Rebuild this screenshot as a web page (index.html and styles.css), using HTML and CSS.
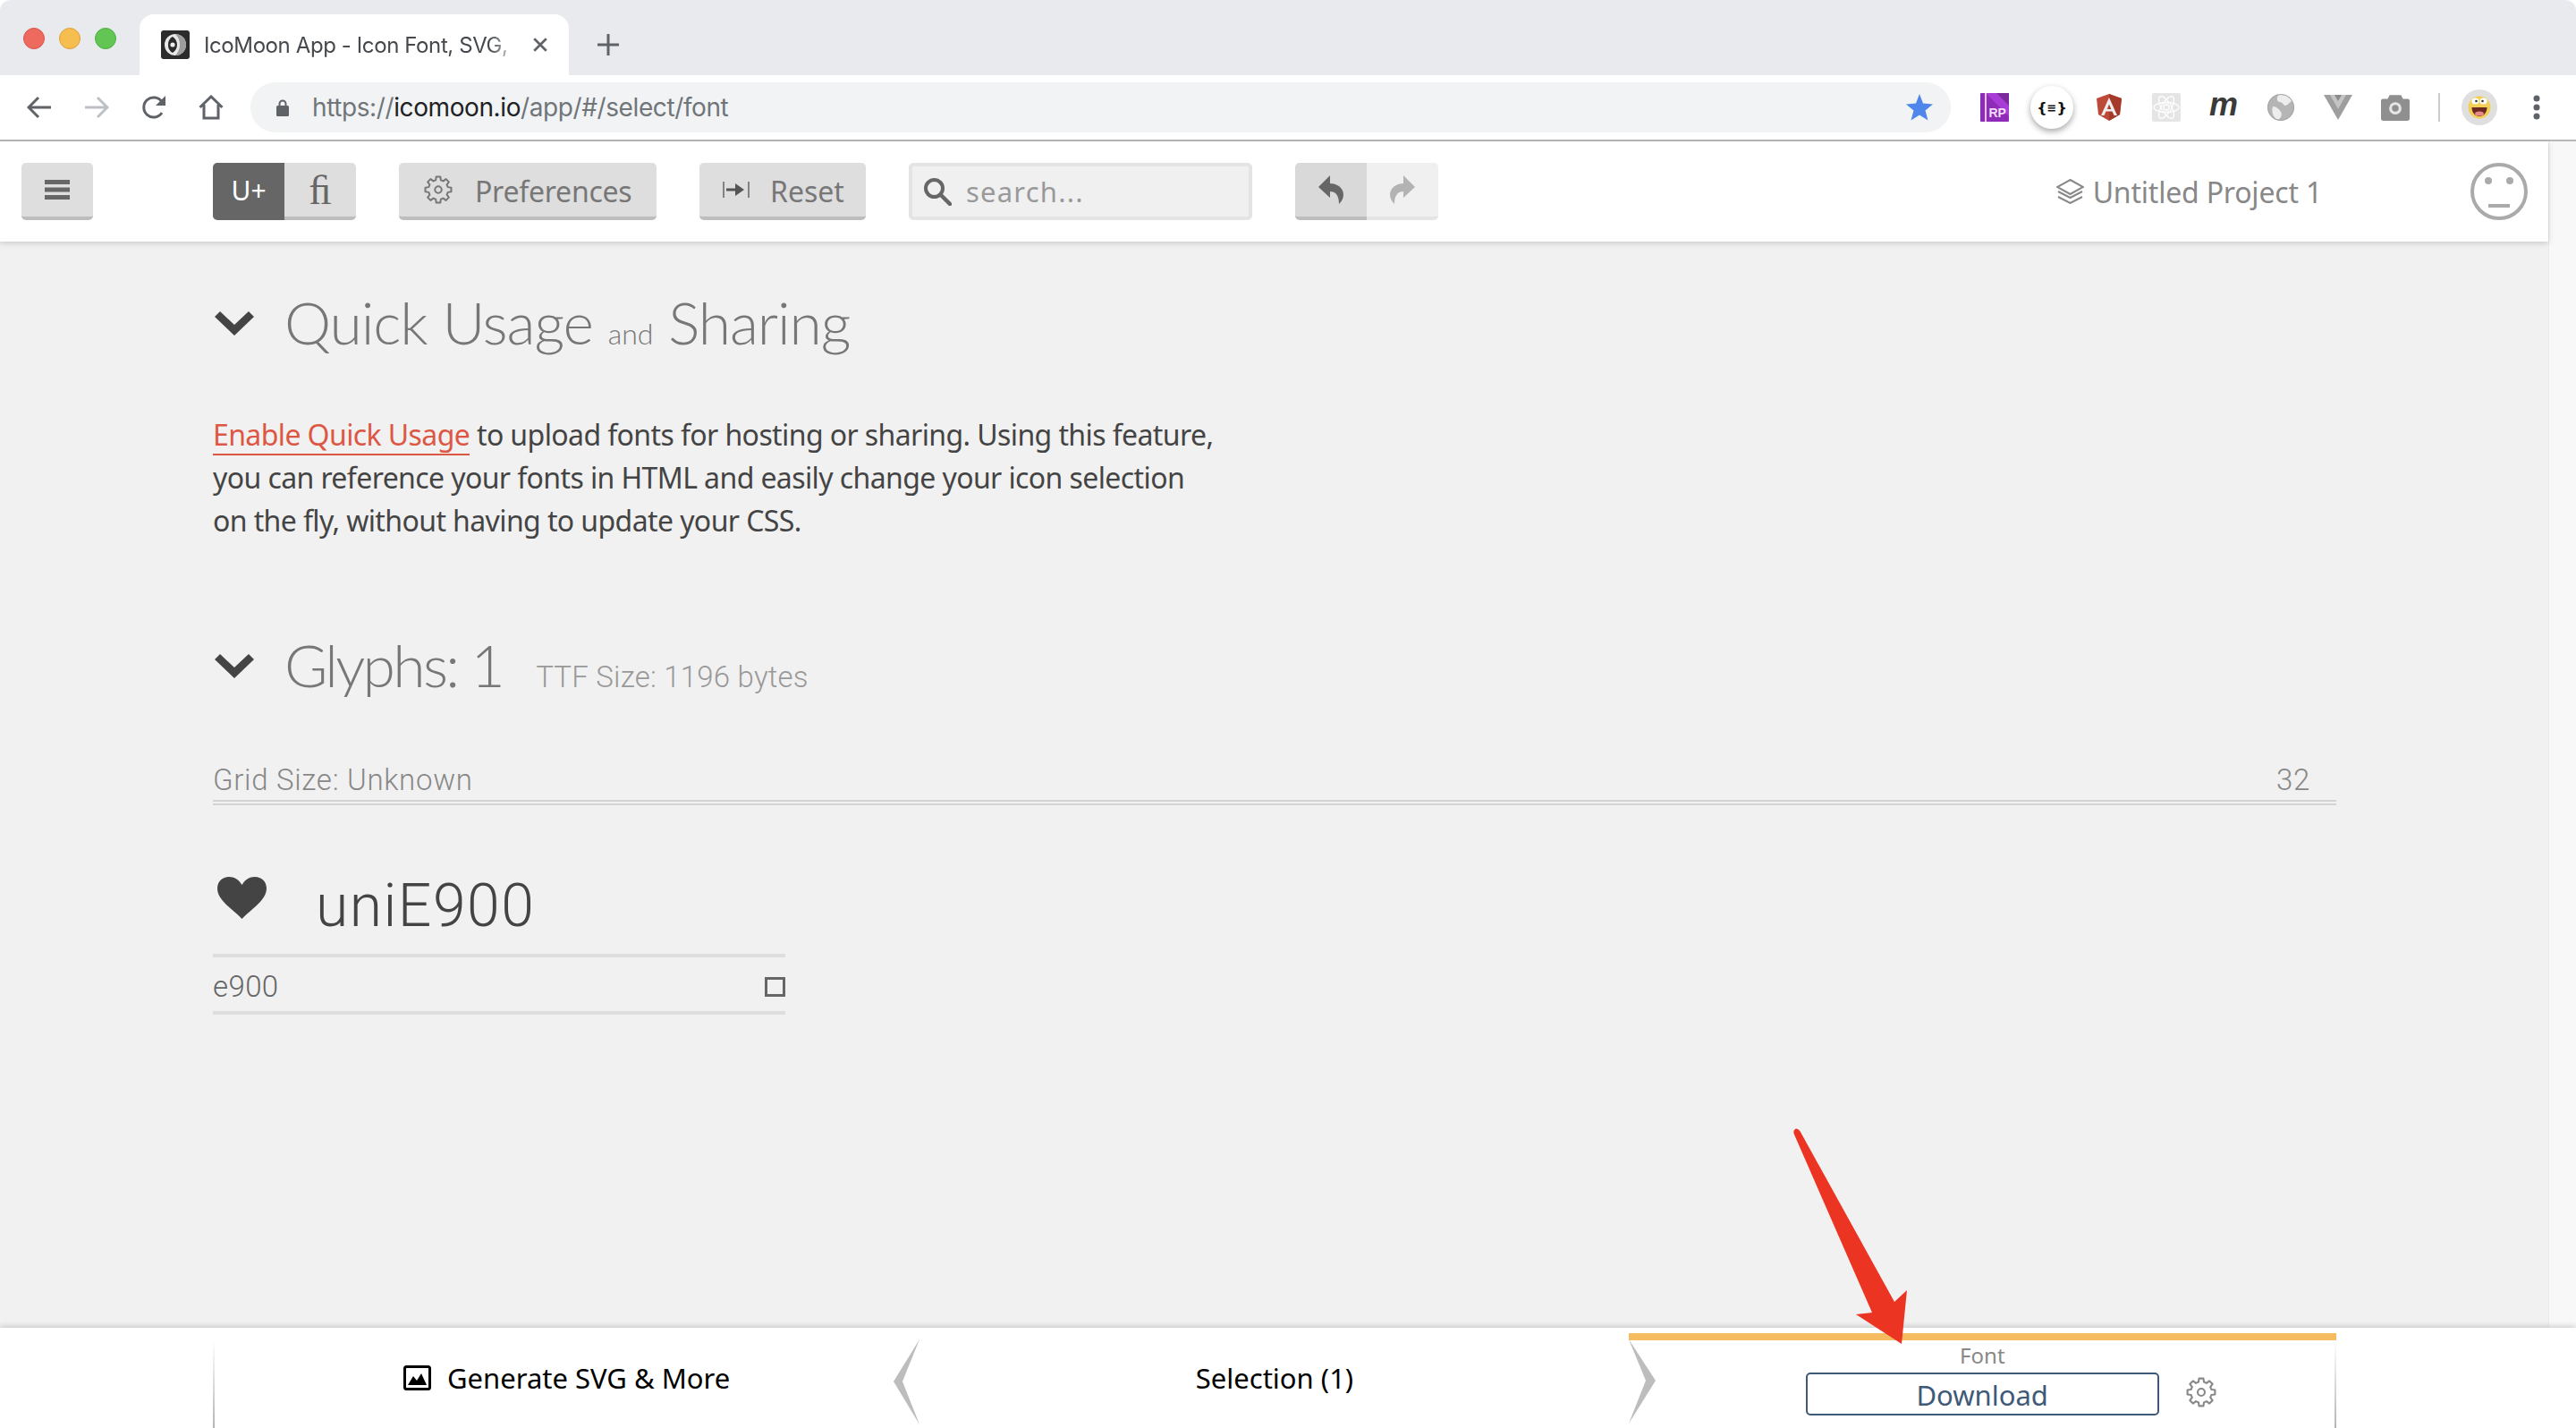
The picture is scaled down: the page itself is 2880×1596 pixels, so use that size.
FILE: index.html
```html
<!DOCTYPE html>
<html lang="en">

<head>
    <meta charset="UTF-8">
    <meta name="viewport" content="width=device-width, initial-scale=1.0">
    <title>IcoMoon App - Icon Font, SVG, PDF &amp; PNG Generator</title>
    <link rel="stylesheet" href="styles.css">
</head>

<body>
    <svg class="defs" width="0" height="0">
        <symbol id="gear" viewBox="0 0 24 24">
            <polygon points="9.85,3.98 10.28,1.14 13.72,1.14 14.15,3.98 16.15,4.81 18.47,3.1 20.9,5.53 19.19,7.85 20.02,9.85 22.86,10.28 22.86,13.72 20.02,14.15 19.19,16.15 20.9,18.47 18.47,20.9 16.15,19.19 14.15,20.02 13.72,22.86 10.28,22.86 9.85,20.02 7.85,19.19 5.53,20.9 3.1,18.47 4.81,16.15 3.98,14.15 1.14,13.72 1.14,10.28 3.98,9.85 4.81,7.85 3.1,5.53 5.53,3.1 7.85,4.81" fill="none" stroke="currentColor" stroke-width="1.5" stroke-linejoin="round"/>
            <circle cx="12" cy="12" r="2.8" fill="none" stroke="currentColor" stroke-width="1.5"/>
        </symbol>
        <symbol id="chevron" viewBox="0 0 44 27">
            <polygon points="0,6 6,0 22,15 38,0 44,6 22,27" fill="currentColor"/>
        </symbol>
    </svg>

    <!-- browser chrome -->
    <div class="tabstrip">
        <div class="lights">
            <span class="light red"></span>
            <span class="light yellow"></span>
            <span class="light green"></span>
        </div>
        <div class="tab">
            <svg class="favicon" viewBox="0 0 32 32">
                <rect width="32" height="32" rx="3" fill="#2b2b2b"/>
                <circle cx="16" cy="16" r="12" fill="#e8e8e8"/>
                <path d="M16 4a12 12 0 0 1 0 24c3-3 5-7 5-12s-2-9-5-12z" fill="#9d9d9d"/>
                <path d="M13 7c-4 2-5 6-5 9s1 7 5 9c3-2 5-5 5-9s-2-7-5-9z" fill="#2b2b2b"/>
                <circle cx="13" cy="16" r="2.6" fill="#eee"/>
            </svg>
            <span class="tab-title">IcoMoon App - Icon Font, SVG,</span>
            <svg class="tab-close" viewBox="0 0 16 16"><path d="M2 2l12 12M14 2L2 14" stroke="#5f6368" stroke-width="2.4"/></svg>
        </div>
        <svg class="new-tab" viewBox="0 0 24 24"><path d="M12 0v24M0 12h24" stroke="#5f6368" stroke-width="3"/></svg>
    </div>

    <div class="omnibar">
        <button class="nav-btn">
            <svg viewBox="0 0 28 28"><path d="M27 14H3M13 3L2 14l11 11" fill="none" stroke="#5f6368" stroke-width="3"/></svg>
        </button>
        <button class="nav-btn">
            <svg viewBox="0 0 28 28"><path d="M1 14h24M15 3l11 11-11 11" fill="none" stroke="#bdc1c6" stroke-width="3"/></svg>
        </button>
        <button class="nav-btn">
            <svg viewBox="0 0 28 28"><path d="M23 20a11 11 0 1 1 0-12" fill="none" stroke="#5f6368" stroke-width="3"/><polygon points="27,1 27,12 16,12" fill="#5f6368"/></svg>
        </button>
        <button class="nav-btn">
            <svg viewBox="0 0 28 28"><path d="M1.5 14L14 2l12.5 12M6 11v15h16V11" fill="none" stroke="#5f6368" stroke-width="3"/></svg>
        </button>

        <div class="address">
            <svg class="lock" viewBox="0 0 14 20"><path d="M3.5 9V6a3.5 3.5 0 0 1 7 0v3" fill="none" stroke="#5f6368" stroke-width="2"/><rect y="8" width="14" height="12" rx="1.5" fill="#5f6368"/></svg>
            <span class="url">https://<b>icomoon.io</b>/app/#/select/font</span>
            <svg class="star" viewBox="0 0 30 30"><polygon points="15,0 19,10.5 30,11.5 21.500,18.500 24.500,29.500 15,23.500 5.500,29.500 8.500,18.500 0,11.500 11,10.500" fill="#4f86ec"/></svg>
        </div>

        <div class="extensions">
            <span class="ext">
                <svg viewBox="0 0 32 32">
                    <rect width="32" height="32" rx="1" fill="#8e2bb8"/>
                    <polygon points="6,0 32,0 32,26" fill="#a93cd6"/>
                    <polygon points="18,0 32,0 32,14" fill="#7b2a9e"/>
                    <rect x="5" width="2" height="32" fill="#e7c6f2"/>
                    <text x="9.500" y="27" class="ext-rp">RP</text>
                </svg>
            </span>
            <span class="ext ext-active">
                <span class="ext-bubble">{<i>≡</i>}</span>
            </span>
            <span class="ext">
                <svg viewBox="0 0 32 32">
                    <polygon points="16,1 2,6 4,24 16,31 28,24 30,6" fill="#bd4a38"/>
                    <polygon points="16,1 30,6 28,24 16,31" fill="#a63a2a"/>
                    <path d="M16 5L7 25h3.500l2-4.500h7l2 4.500H25L16 5zm0 7.500l2.300 5.500h-4.600L16 12.500z" fill="#eee"/>
                </svg>
            </span>
            <span class="ext">
                <svg viewBox="0 0 32 32">
                    <rect width="32" height="32" rx="2" fill="#e5e5e5"/>
                    <g fill="none" stroke="#fff" stroke-width="1.300">
                        <ellipse cx="16" cy="16" rx="14" ry="5.500"/>
                        <ellipse cx="16" cy="16" rx="14" ry="5.500" transform="rotate(60 16 16)"/>
                        <ellipse cx="16" cy="16" rx="14" ry="5.500" transform="rotate(120 16 16)"/>
                        <circle cx="16" cy="16" r="3"/>
                    </g>
                </svg>
            </span>
            <span class="ext ext-m">m</span>
            <span class="ext">
                <svg viewBox="0 0 32 32">
                    <circle cx="16" cy="16" r="15" fill="#b5b5b5"/>
                    <path d="M16 1c5 0 10 3 13 8-4 1-5 5-8 5-2 0-3-4-6-4-4 0-4-5-1-9h2zM7 15c4 0 7 3 9 6s0 7-3 9C8 28 5 22 7 15z" fill="#ededed"/>
                    <circle cx="16" cy="16" r="14.500" fill="none" stroke="#a5a5a5"/>
                </svg>
            </span>
            <span class="ext">
                <svg viewBox="0 0 32 28">
                    <polygon points="0,0 32,0 16,28" fill="#9e9e9e"/>
                    <polygon points="7,0 25,0 16,16" fill="#c4c4c4"/>
                    <polygon points="12,0 20,0 16,7" fill="#8a8a8a"/>
                </svg>
            </span>
            <span class="ext">
                <svg viewBox="0 0 30 28">
                    <path d="M2 5h5l2-4h12l2 4h5a2 2 0 0 1 2 2v19a2 2 0 0 1-2 2H2a2 2 0 0 1-2-2V7a2 2 0 0 1 2-2z" fill="#8f8f8f"/>
                    <circle cx="15" cy="15" r="6.500" fill="#e5e5e5"/>
                    <circle cx="15" cy="15" r="3.500" fill="#8f8f8f"/>
                </svg>
            </span>
        </div>
        <span class="omni-sep"></span>
        <svg class="avatar" viewBox="0 0 40 40">
            <circle cx="20" cy="20" r="20" fill="#dfdfdf"/>
            <circle cx="20" cy="20" r="12.500" fill="#f3cf58"/>
            <ellipse cx="15.500" cy="13" rx="4" ry="3.500" fill="#fff"/>
            <ellipse cx="24.500" cy="13" rx="4" ry="3.500" fill="#fff"/>
            <circle cx="16.500" cy="13" r="1.300" fill="#333"/>
            <circle cx="23.500" cy="13" r="1.300" fill="#333"/>
            <path d="M11.500 20h17c0 6-4 10-8.500 10s-8.500-4-8.500-10z" fill="#6a2a20"/>
            <ellipse cx="20" cy="27" rx="5" ry="2.500" fill="#e88a8a"/>
        </svg>
        <svg class="dots" viewBox="0 0 8 28">
            <circle cx="4" cy="4" r="3.500" fill="#5f6368"/>
            <circle cx="4" cy="14" r="3.500" fill="#5f6368"/>
            <circle cx="4" cy="24" r="3.500" fill="#5f6368"/>
        </svg>
    </div>

    <!-- icomoon app -->
    <div class="app">
        <div class="app-main">
            <div class="toolbar">
                <button class="btn btn-menu">
                    <svg viewBox="0 0 28 22"><path d="M0 0h28v5H0zM0 8.500h28v5H0zM0 17h28v5H0z" fill="#666"/></svg>
                </button>
                <div class="btn-group">
                    <button class="btn btn-dark">U+</button>
                    <button class="btn btn-fi">ﬁ</button>
                </div>
                <button class="btn btn-prefs">
                    <svg class="btn-gear"><use href="#gear"/></svg>
                    <span>Preferences</span>
                </button>
                <button class="btn btn-reset">
                    <svg viewBox="0 0 30 20"><path d="M1 1v18M29 1v18" stroke="#666" stroke-width="1.500"/><path d="M4 10h12" stroke="#555" stroke-width="3"/><polygon points="14,3 24,10 14,17" fill="#555"/></svg>
                    <span>Reset</span>
                </button>
                <div class="search">
                    <svg viewBox="0 0 32 32"><circle cx="12.500" cy="12.500" r="9.500" fill="none" stroke="#666" stroke-width="4"/><path d="M19.500 19.500L30 30" stroke="#666" stroke-width="4.500" stroke-linecap="round"/></svg>
                    <span>search...</span>
                </div>
                <div class="btn-group undo-group">
                    <button class="btn btn-undo">
                        <svg viewBox="0 0 28 32"><path d="M13 0L0 13l13 12v-7c6 0 10 4 10 14 5-5 6-10 4-15s-8-8-14-8z" fill="#666"/></svg>
                    </button>
                    <button class="btn btn-redo">
                        <svg viewBox="0 0 28 32"><path d="M15 0l13 13-13 12v-7C9 18 5 22 5 32 0 27-1 22 1 17s8-8 14-8z" fill="#b3b3b3"/></svg>
                    </button>
                </div>
                <div class="project">
                    <svg viewBox="0 0 31 28"><path d="M15.500 1L30 9l-14.500 8L1 9zM2 14l13.500 7L29 14M2 20l13.500 7L29 20" fill="none" stroke="#888" stroke-width="2"/></svg>
                    <span>Untitled Project 1</span>
                </div>
                <svg class="face" viewBox="0 0 64 64">
                    <circle cx="32" cy="32" r="30" fill="none" stroke="#aaa" stroke-width="4"/>
                    <circle cx="20" cy="20" r="4" fill="#aaa"/>
                    <circle cx="44" cy="20" r="4" fill="#aaa"/>
                    <rect x="20" y="46" width="24" height="4" fill="#aaa"/>
                </svg>
            </div>

            <div class="content">
                <h2 class="section-title">
                    <svg class="chevron"><use href="#chevron"/></svg>
                    <span>Quick Usage <small>and</small> Sharing</span>
                </h2>
                <p class="intro">
                    <a class="link">Enable Quick Usage</a> to upload fonts for hosting or sharing. Using this feature,<br>
                    you can reference your fonts in HTML and easily change your icon selection<br>
                    on the fly, without having to update your CSS.
                </p>

                <h2 class="section-title glyphs-title">
                    <svg class="chevron"><use href="#chevron"/></svg>
                    <span>Glyphs: 1</span>
                    <small class="ttf-size">TTF Size: 1196 bytes</small>
                </h2>

                <div class="grid-size">
                    <span>Grid Size: Unknown</span>
                    <span>32</span>
                </div>

                <div class="glyph">
                    <div class="glyph-name">
                        <svg viewBox="0 0 55 47"><path d="M27.500 47C20 38 0 27 0 13 0 5 6 0 13 0c6 0 11 3 14.500 9C31 3 36 0 42 0c7 0 13 5 13 13 0 14-20 25-27.500 34z" fill="#444"/></svg>
                        <span>uniE900</span>
                    </div>
                    <div class="glyph-code">
                        <span>e900</span>
                        <i class="glyph-check"></i>
                    </div>
                </div>
            </div>
        </div>
        <div class="scrollbar"></div>
    </div>

    <div class="footer">
        <div class="footer-panes">
            <div class="pane pane-left">
                <svg class="pane-icon" viewBox="0 0 31 28"><rect x="1.500" y="1.500" width="28" height="25" rx="2" fill="none" stroke="#000" stroke-width="3"/><polygon points="5,22 11,12 15,17 20,9 26,22" fill="#000"/></svg>
                <span>Generate SVG &amp; More</span>
                <svg class="pane-chev pane-chev-left" viewBox="0 0 30 96"><polygon points="29,0 0,47 29,95 10,47" fill="#bdbdbd"/></svg>
            </div>
            <div class="pane">
                <span>Selection (1)</span>
            </div>
            <div class="pane pane-font">
                <div class="font-bar"></div>
                <svg class="pane-chev pane-chev-right" viewBox="0 0 30 96"><polygon points="0,0 30,46 0,94 19,46" fill="#bdbdbd"/></svg>
                <div class="font-label">Font</div>
                <div class="download-row">
                    <button class="download">Download</button>
                    <svg class="download-gear"><use href="#gear"/></svg>
                </div>
            </div>
        </div>
    </div>

    <!-- red annotation arrow -->
    <svg class="arrow" viewBox="0 0 140 250">
        <path d="M6 13C4 9 7 5 10 7c2 1 3 3 4 5L118 200l14-13-6 60-51-33 18-2z" fill="#ec3423"/>
    </svg>
</body>

</html>
```

FILE: styles.css
```css
body {
    margin: 0;
    width: 2880px;
    height: 1596px;
    overflow: hidden;
    position: relative;
    display: flex;
    flex-direction: column;
    background-color: #fff;
    font-family: "Noto Sans", sans-serif;
    color: #444;
}

button {
    font-family: inherit;
    border: none;
    padding: 0;
}

.defs {
    position: absolute;
}

/* tab strip */
.tabstrip {
    height: 84px;
    flex: none;
    display: flex;
    align-items: flex-end;
    background-color: #e8eaed;
    border-radius: 12px 12px 0 0;
}

.lights {
    width: 156px;
    height: 84px;
    display: flex;
    gap: 16px;
    padding: 31px 0 0 26px;
    box-sizing: border-box;
}

.light {
    width: 24px;
    height: 24px;
    border-radius: 50%;
    box-sizing: border-box;
}

.red { background-color: #ee6a5f; border: 1px solid #d9534a; }
.yellow { background-color: #f6be4f; border: 1px solid #deA236; }
.green { background-color: #62c554; border: 1px solid #4faf42; }

.tab {
    width: 480px;
    height: 68px;
    display: flex;
    align-items: center;
    background-color: #fff;
    border-radius: 16px 16px 0 0;
    padding-left: 24px;
    box-sizing: border-box;
}

.favicon {
    width: 32px;
    height: 32px;
    flex: none;
}

.tab-title {
    width: 350px;
    margin-left: 16px;
    font-family: Inter, sans-serif;
    font-size: 24px;
    letter-spacing: -0.4px;
    color: #45484c;
    white-space: nowrap;
    -webkit-mask-image: linear-gradient(to right, #000 91%, rgba(0, 0, 0, 0.2) 99%);
    mask-image: linear-gradient(to right, #000 91%, rgba(0, 0, 0, 0.2) 99%);
}

.tab-close {
    width: 18px;
    height: 18px;
    margin-left: 17px;
}

.new-tab {
    width: 24px;
    height: 24px;
    margin: 0 0 22px 32px;
}

/* address row */
.omnibar {
    height: 74px;
    flex: none;
    display: flex;
    align-items: center;
    padding-left: 12px;
    box-sizing: border-box;
    background-color: #fff;
    border-bottom: 2px solid #b8b8b8;
}

.nav-btn {
    width: 64px;
    height: 56px;
    display: flex;
    align-items: center;
    justify-content: center;
    background: none;
}

.nav-btn svg {
    width: 28px;
    height: 28px;
}

.address {
    width: 1901px;
    height: 56px;
    margin-left: 12px;
    display: flex;
    align-items: center;
    padding-left: 29px;
    box-sizing: border-box;
    background-color: #f1f3f4;
    border-radius: 28px;
}

.lock {
    width: 14px;
    height: 20px;
}

.url {
    margin-left: 26px;
    font-family: Inter, sans-serif;
    font-size: 28px;
    letter-spacing: -0.4px;
    color: #70757a;
}

.url b {
    font-weight: 400;
    color: #202124;
}

.star {
    width: 30px;
    height: 30px;
    margin-left: auto;
    margin-right: 20px;
}

.extensions {
    display: flex;
    margin-left: 17px;
}

.ext {
    width: 64px;
    height: 64px;
    display: flex;
    align-items: center;
    justify-content: center;
}

.ext svg {
    width: 32px;
    height: 32px;
}

.ext-rp {
    font-family: "Liberation Sans", sans-serif;
    font-size: 14px;
    font-weight: 700;
    fill: #f3dcfb;
}

.ext-bubble {
    width: 48px;
    height: 48px;
    display: flex;
    align-items: center;
    justify-content: center;
    background-color: #fff;
    border-radius: 50%;
    box-shadow: 0 3px 7px rgba(0, 0, 0, 0.35);
    font-family: "DejaVu Sans", sans-serif;
    font-size: 16px;
    font-weight: 700;
    color: #111;
}

.ext-bubble i {
    font-style: normal;
    font-size: 13px;
}

.ext-m {
    font-family: "Liberation Sans", sans-serif;
    font-size: 36px;
    font-weight: 700;
    font-style: italic;
    color: #3a3a3a;
    padding-bottom: 6px;
    box-sizing: border-box;
}

.omni-sep {
    width: 2px;
    height: 32px;
    margin-left: 16px;
    background-color: #ccc;
}

.avatar {
    width: 40px;
    height: 40px;
    margin-left: 24px;
}

.dots {
    width: 8px;
    height: 28px;
    margin-left: 40px;
}

/* app */
.app {
    flex: 1;
    display: flex;
    min-height: 0;
}

.app-main {
    width: 2849px;
    display: flex;
    flex-direction: column;
    background-color: #f1f1f1;
}

.scrollbar {
    flex: 1;
    background-color: #f8f8f8;
    border-left: 1px solid #e9e9e9;
}

.toolbar {
    height: 112px;
    flex: none;
    display: flex;
    align-items: center;
    padding: 0 23px 0 24px;
    box-sizing: border-box;
    background-color: #fff;
    box-shadow: 0 2px 6px rgba(0, 0, 0, 0.16);
    position: relative;
}

.btn {
    height: 64px;
    display: flex;
    align-items: center;
    justify-content: center;
    box-sizing: border-box;
    background-color: #dedede;
    border-bottom: 4px solid #bdbdbd;
    border-radius: 5px;
    color: #777;
    font-size: 32px;
}

.btn-menu {
    width: 80px;
}

.btn-menu svg {
    width: 28px;
    height: 22px;
}

.btn-group {
    display: flex;
    margin-left: 134px;
}

.btn-group .btn {
    width: 80px;
    border-radius: 0 5px 5px 0;
}

.btn-group .btn:first-child {
    border-radius: 5px 0 0 5px;
}

.btn-dark {
    background-color: #666;
    border-bottom-color: #666;
    color: #fff;
    font-size: 30px;
}

.btn-fi {
    font-family: "Liberation Serif", serif;
    font-size: 46px;
    color: #666;
}

.btn-prefs {
    width: 288px;
    margin-left: 48px;
    justify-content: flex-start;
    padding-left: 28px;
}

.btn-gear {
    width: 32px;
    height: 32px;
    color: #777;
}

.btn-prefs span {
    margin: 2px 0 0 25px;
    letter-spacing: -0.25px;
}

.btn-reset {
    width: 186px;
    margin-left: 48px;
    justify-content: flex-start;
    padding-left: 26px;
}

.btn-reset svg {
    width: 30px;
    height: 20px;
}

.btn-reset span {
    margin: 2px 0 0 23px;
}

.search {
    width: 384px;
    height: 64px;
    margin-left: 48px;
    display: flex;
    align-items: center;
    padding-left: 12px;
    box-sizing: border-box;
    background-color: #f0f0f0;
    border: 4px solid #e4e4e4;
    border-radius: 5px;
    font-size: 31px;
    letter-spacing: 1.2px;
    color: #999;
}

.search svg {
    width: 32px;
    height: 32px;
}

.search span {
    margin-left: 16px;
}

.undo-group {
    margin-left: 48px;
}

.btn-undo {
    background-color: #d9d9d9;
}

.btn-undo svg,
.btn-redo svg {
    width: 28px;
    height: 32px;
}

.btn-group .btn-redo {
    background-color: #f0f0f0;
    border-bottom-color: #e4e4e4;
}

.project {
    margin-left: auto;
    display: flex;
    align-items: center;
    font-size: 32px;
    letter-spacing: -0.2px;
    color: #888;
    margin-right: 166px;
}

.project svg {
    width: 31px;
    height: 28px;
    margin-right: 10px;
}

.face {
    width: 64px;
    height: 64px;
}

.content {
    flex: 1;
    padding: 0 237px 0 238px;
    min-height: 0;
}

.section-title {
    margin: 28px 0 0;
    display: flex;
    align-items: baseline;
    height: 80px;
    font-family: Lato, sans-serif;
    font-size: 66px;
    font-weight: 300;
    letter-spacing: -1.1px;
    color: #777;
    white-space: nowrap;
    padding-top: 22px;
}

.section-title small {
    font-size: 32px;
    letter-spacing: 0;
}

.chevron {
    width: 44px;
    height: 27px;
    margin: 2px 34px 0 2px;
    color: #444;
    flex: none;
    align-self: center;
}

.intro {
    margin: 62px 0 0;
    font-size: 32px;
    letter-spacing: -0.6px;
    line-height: 48px;
    color: #444;
    white-space: nowrap;
}

.link {
    color: #dd5745;
    border-bottom: 2px solid #dd5745;
}

.glyphs-title {
    margin-top: 75px;
    letter-spacing: -2.7px;
}

.ttf-size.ttf-size {
    margin-left: 37px;
    font-family: Roboto, sans-serif;
    font-size: 33px;
    letter-spacing: 0.2px;
    color: #999;
}

.grid-size {
    margin-top: 69px;
    display: flex;
    justify-content: space-between;
    padding: 0 29px 2px 0;
    font-family: Roboto, sans-serif;
    font-weight: 300;
    font-size: 33px;
    letter-spacing: 0.7px;
    color: #888;
    border-bottom: 6px double #d3d3d3;
    line-height: 40px;
}

.glyph {
    width: 640px;
    margin-top: 66px;
}

.glyph-name {
    display: flex;
    align-items: center;
    height: 100px;
    padding-bottom: 4px;
    margin-top: -4px;
    border-bottom: 4px solid #ddd;
    font-family: Roboto, sans-serif;
    font-weight: 300;
    font-size: 66px;
    letter-spacing: 1.5px;
    color: #444;
}

.glyph-name svg {
    width: 55px;
    height: 47px;
    margin: 0 55px 18px 5px;
}

.glyph-code {
    display: flex;
    align-items: center;
    justify-content: space-between;
    height: 56px;
    padding-top: 4px;
    border-bottom: 4px solid #ddd;
    font-family: Roboto, sans-serif;
    font-weight: 300;
    font-size: 33px;
    letter-spacing: 0.4px;
    color: #666;
}

.glyph-check {
    width: 23px;
    height: 22px;
    margin-top: 2px;
    box-sizing: border-box;
    border: 3px solid #666;
}

/* bottom bar */
.footer {
    position: absolute;
    left: 0;
    right: 0;
    bottom: 0;
    height: 112px;
    background-color: #fff;
    box-shadow: 0 -2px 6px rgba(0, 0, 0, 0.16);
}

.footer-panes {
    width: 2374px;
    height: 100%;
    margin-left: 238px;
    display: grid;
    grid-template-columns: repeat(3, 1fr);
}

.pane {
    position: relative;
    display: flex;
    align-items: center;
    justify-content: center;
    box-sizing: border-box;
    font-size: 31px;
    color: #000;
}

.pane-left::before,
.pane-font::after {
    content: "";
    position: absolute;
    top: 14px;
    bottom: 0;
    width: 2px;
    background: linear-gradient(to bottom, transparent, #b5b5b5);
}

.pane-left::before {
    left: 0;
}

.pane-font::after {
    right: 0;
}

.pane-icon {
    width: 31px;
    height: 28px;
    margin-right: 18px;
}

.pane-chev {
    position: absolute;
    top: 13px;
    width: 30px;
    height: 96px;
}

.pane-chev-left {
    right: 0;
}

.pane-chev-right {
    left: 0;
}

.pane-font {
    flex-direction: column;
    justify-content: flex-start;
    padding-top: 6px;
}

.font-bar {
    width: 100%;
    height: 8px;
    background-color: #f5bc60;
}

.font-label {
    height: 36px;
    line-height: 34px;
    font-size: 24px;
    color: #888;
}

.download-row {
    width: 100%;
    display: flex;
    align-items: center;
    padding-left: 198px;
    box-sizing: border-box;
}

.download {
    width: 395px;
    height: 48px;
    box-sizing: border-box;
    background-color: #fff;
    border: 2px solid #3f5a78;
    border-radius: 5px;
    padding-top: 2px;
    font-size: 31px;
    line-height: 42px;
    color: #3f5a78;
}

.download-gear {
    width: 34px;
    height: 34px;
    margin: 0 0 4px 30px;
    color: #888;
}

.arrow {
    position: absolute;
    left: 2000px;
    top: 1255px;
    width: 140px;
    height: 250px;
}
```
